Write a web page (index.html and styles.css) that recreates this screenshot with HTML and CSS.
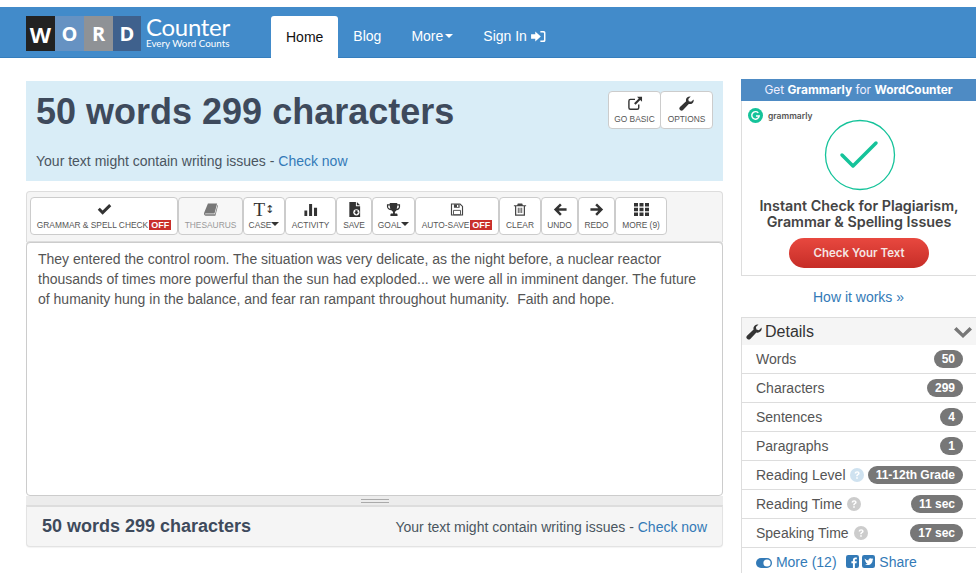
FILE: index.html
```html
<!DOCTYPE html>
<html lang="en">
<head>
<meta charset="utf-8">
<title>WordCounter</title>
<link rel="stylesheet" href="styles.css">
</head>
<body>
<svg class="defs" width="0" height="0">
  <defs>
    <symbol id="i-wrench" viewBox="0 0 16 16"><path d="M15.6 3.6c.3 1.6-.1 3-1.3 4-1.1 1-2.5 1.300-3.900.8L4.300 15c-.8.800-2.100.800-2.900.1l-.5-.5c-.8-.8-.7-2.100.1-2.900l6.600-6.100C7.200 4.200 7.500 2.800 8.600 1.700 9.700.6 11.100.2 12.500.5L9.900 3.100l.5 2.500 2.500.6z"/></symbol>
    <symbol id="i-check" viewBox="0 0 16 16"><path d="M6 13.500 0.800 8.300 3 6.100l3 3L13 2.200l2.200 2.200z"/></symbol>
    <symbol id="i-q" viewBox="0 0 14 14"><circle cx="7" cy="7" r="7"/><path d="M4.600 5.400C4.800 4 5.800 3.200 7.200 3.200c1.400 0 2.400.9 2.400 2 0 1-.6 1.500-1.200 1.900-.5.3-.7.5-.7 1.100H6.200c0-1 .3-1.500 1-2 .5-.3.800-.5.800-1 0-.4-.3-.7-.8-.7-.6 0-.9.300-1 .900zM6.200 9.200h1.600v1.600H6.200z" fill="#fff"/></symbol>
  </defs>
</svg>
<header class="navbar">
  <a class="logo" href="#">
    <span class="tile tile-w">W</span><span class="tile tile-o">O</span><span class="tile tile-r">R</span><span class="tile tile-d">D</span>
    <span class="logo-text"><span class="logo-main">Counter</span><span class="logo-sub">Every Word Counts</span></span>
  </a>
  <nav class="nav">
    <a class="nav-item active" href="#">Home</a>
    <a class="nav-item" href="#">Blog</a>
    <a class="nav-item" href="#">More<span class="caret caret-white"></span></a>
    <a class="nav-item" href="#">Sign In
      <svg class="signin" viewBox="0 0 16 14" width="15" height="13"><path d="M0 4.500h4.500V1.500L10.500 7l-6 5.500v-3H0z" fill="#fff"/><path d="M10 1h3.500C15 1 15.500 2 15.500 3v8c0 1-.5 2-2 2H10v-1.600h3c.6 0 .9-.4.900-.9V3.500c0-.5-.3-.9-.9-.9h-3z" fill="#fff"/></svg>
    </a>
  </nav>
</header>

<div class="page">
  <main class="main">
    <section class="hero">
      <h1 class="hero-title">50 words 299 characters</h1>
      <p class="hero-note">Your text might contain writing issues - <a href="#">Check now</a></p>
      <div class="hero-btns">
        <a class="tool hero-tool t-basic" href="#">
          <svg class="ic" viewBox="0 0 16 16" width="16" height="16"><path d="M12 9v3.500c0 1-.7 1.600-1.600 1.600H3.100C2.200 14.100 1.500 13.500 1.500 12.500V5.200c0-1 .7-1.600 1.600-1.600H8" fill="none" stroke="#333" stroke-width="1.500"/><path d="M10.200 0.800H15.500V6L13.600 4.200 8.600 9.300 7 7.700l5-5z" fill="#333"/></svg>
          <span>GO BASIC</span>
        </a>
        <a class="tool hero-tool t-options" href="#">
          <svg class="ic" width="15" height="15"><use href="#i-wrench"/></svg>
          <span>OPTIONS</span>
        </a>
      </div>
    </section>

    <div class="toolbar">
      <a class="tool t-grammar" href="#"><svg class="ic" width="15" height="15"><use href="#i-check"/></svg><span>GRAMMAR &amp; SPELL CHECK<b class="off">OFF</b></span></a>
      <a class="tool tool-dim t-thes" href="#"><svg class="ic" viewBox="0 0 16 16" width="14" height="14"><path d="M4.500 1H15l-3 11.500H1.800C1 12.500.8 13.500 1.800 13.500H12.500l3-11 .5.800-3 11.700H2C.3 15-.4 13.500.3 11.500z" fill="#777"/></svg><span>THESAURUS</span></a>
      <a class="tool t-case" href="#"><span class="ic tt">T<span class="tt-arrow">↕</span></span><span>CASE<i class="caret"></i></span></a>
      <a class="tool t-activity" href="#"><svg class="ic" viewBox="0 0 16 16" width="15" height="15"><path d="M1.500 9h3v6h-3zM6.500 2h3.200v13H6.500zM11.700 6H15v9h-3.300z" fill="#333"/></svg><span>ACTIVITY</span></a>
      <a class="tool t-save" href="#"><svg class="ic" viewBox="0 0 16 16" width="15" height="15"><path d="M2.500 0H9.500v4.500H14V16H2.500z" fill="#333"/><path d="M10.500 0 14 3.500H10.500z" fill="#333"/><circle cx="10" cy="11" r="3.300" fill="#fff"/><path d="M8.800 8.800h2.400v2h1.200L10 13.300 7.600 10.800h1.200z" fill="#333"/></svg><span>SAVE</span></a>
      <a class="tool t-goal" href="#"><svg class="ic" viewBox="0 0 16 16" width="15" height="15"><path d="M4 1h8v1.500h3V5c0 2-1.500 3.500-3.800 3.800-.5.800-1.200 1.300-1.700 1.500v2h1.500c.8 0 1.300.5 1.300 1.200V15H4.700v-1.500c0-.7.500-1.200 1.300-1.200h1.500v-2C7 10.100 6.300 9.600 5.800 8.800 3.500 8.500 1 7 1 5V2.500h3zM2.300 3.800V5c0 1 .9 1.800 2.300 2.300C4.300 6.300 4.100 5.100 4 3.800zM13.700 3.800H12c-.1 1.300-.3 2.500-.6 3.500 1.400-.5 2.300-1.300 2.300-2.300z" fill="#333" fill-rule="evenodd"/></svg><span>GOAL<i class="caret"></i></span></a>
      <a class="tool t-auto" href="#"><svg class="ic" viewBox="0 0 16 16" width="14" height="14"><path d="M1.700 1.700h9.800l2.800 2.800v9.800H1.700z" fill="none" stroke="#444" stroke-width="1.300"/><path d="M4.500 2v4h6.500V2zM8 2.800h1.500v2.400H8z" fill="#444" fill-rule="evenodd"/><path d="M4 9h8v5H4z" fill="none" stroke="#444"/></svg><span>AUTO-SAVE<b class="off">OFF</b></span></a>
      <a class="tool t-clear" href="#"><svg class="ic" viewBox="0 0 16 16" width="14" height="14"><path d="M5.500 1h5l.8 2H15v1.300h-1.300V15H2.300V4.300H1V3h3.700zM3.700 4.300v9.400h8.600V4.300zM5.500 6h1v6h-1zM7.500 6h1v6h-1zM9.500 6h1v6h-1z" fill="#444" fill-rule="evenodd"/></svg><span>CLEAR</span></a>
      <a class="tool t-undo" href="#"><svg class="ic" viewBox="0 0 16 16" width="14" height="14"><path d="M8 1 10 3 6.500 6.500H15.500v3H6.500L10 13l-2 2L1 8z" fill="#333"/></svg><span>UNDO</span></a>
      <a class="tool t-undo" href="#"><svg class="ic" viewBox="0 0 16 16" width="14" height="14"><path d="M8 1 6 3l3.500 3.500H.5v3h9L6 13l2 2 7-7z" fill="#333"/></svg><span>REDO</span></a>
      <a class="tool t-more" href="#"><svg class="ic" viewBox="0 0 15 13" width="15" height="13"><path d="M0 0h4v3.500H0zM5.500 0h4v3.500h-4zM11 0h4v3.500h-4zM0 4.750h4v3.500H0zM5.500 4.750h4v3.500h-4zM11 4.750h4v3.500h-4zM0 9.500h4V13H0zM5.500 9.500h4V13h-4zM11 9.500h4V13h-4z" fill="#333"/></svg><span>MORE (9)</span></a>
    </div>

    <div class="editor">They entered the control room. The situation was very delicate, as the night before, a nuclear reactor thousands of times more powerful than the sun had exploded... we were all in imminent danger. The future of humanity hung in the balance, and fear ran rampant throughout humanity.&nbsp; Faith and hope.</div>
    <div class="grip"><span class="grip-lines"></span></div>
    <footer class="summary">
      <strong>50 words 299 characters</strong>
      <span>Your text might contain writing issues - <a href="#">Check now</a></span>
    </footer>
  </main>

  <aside class="side">
    <div class="ad">
      <div class="ad-head">Get <b>Grammarly</b> for <b>WordCounter</b></div>
      <div class="ad-brand">
        <svg viewBox="0 0 16 16" width="15" height="15"><circle cx="8" cy="8" r="8" fill="#15c39a"/><path d="M11 5.200A4 4 0 1 0 12 8.500H8.500" fill="none" stroke="#fff" stroke-width="1.500"/></svg>
        <span>grammarly</span>
      </div>
      <svg class="ad-check" viewBox="0 0 72 72" width="72" height="72"><circle cx="36" cy="36" r="34.500" fill="none" stroke="#15c39a" stroke-width="1.300"/><path d="M18 36l11 11 23-23" fill="none" stroke="#15c39a" stroke-width="3.500" stroke-linecap="round" stroke-linejoin="round"/></svg>
      <div class="ad-text">Instant Check for Plagiarism,<br>Grammar &amp; Spelling Issues</div>
      <a class="ad-btn" href="#">Check Your Text</a>
    </div>
    <a class="how" href="#">How it works »</a>

    <section class="details">
      <h2 class="details-head">
        <svg width="16" height="16"><use href="#i-wrench"/></svg>
        <span>Details</span>
        <svg class="chev" viewBox="0 0 18 12" width="18" height="12"><path d="M2.500 1 9 7.500 15.500 1 18 3.500 9 12 0 3.500z" fill="#777"/></svg>
      </h2>
      <ul class="stats">
        <li><span>Words</span><b class="badge">50</b></li>
        <li><span>Characters</span><b class="badge">299</b></li>
        <li><span>Sentences</span><b class="badge">4</b></li>
        <li><span>Paragraphs</span><b class="badge">1</b></li>
        <li><span>Reading Level <svg class="q q-blue" width="14" height="14"><use href="#i-q"/></svg></span><b class="badge">11-12th Grade</b></li>
        <li><span>Reading Time <svg class="q" width="14" height="14"><use href="#i-q"/></svg></span><b class="badge">11 sec</b></li>
        <li><span>Speaking Time <svg class="q" width="14" height="14"><use href="#i-q"/></svg></span><b class="badge">17 sec</b></li>
        <li class="stats-more">
          <a href="#"><svg viewBox="0 0 16 10" width="16" height="10"><rect width="16" height="10" rx="5" fill="#337ab7"/><circle cx="11" cy="5" r="3.600" fill="#fff"/></svg> More (12)</a>
          <a class="share" href="#"><svg viewBox="0 0 12 12" width="13" height="13"><rect width="12" height="12" rx="2" fill="#337ab7"/><path d="M8.200 12V7.500h1.500l.2-1.800H8.200V4.700c0-.5.200-.8.800-.8h1V2.300H8.700C7.200 2.300 6.400 3.200 6.400 4.500v1.200H5v1.800h1.400V12z" fill="#fff"/></svg> <svg viewBox="0 0 12 12" width="13" height="13"><rect width="12" height="12" rx="2" fill="#337ab7"/><path d="M2.500 3.200c1 1.200 2.200 1.800 3.500 1.900C5.800 3.800 7 3 8 3c.5 0 .9.200 1.200.5l1-.4-.5.900.8-.2-.7.8c0 2.500-1.800 4.700-4.500 4.700-1 0-1.800-.3-2.500-.7 1 .1 1.700-.2 2.300-.7-.8 0-1.300-.5-1.500-1.100h.7c-.8-.3-1.300-.9-1.300-1.800l.7.200C3 5.100 2.200 4.200 2.500 3.200z" fill="#fff"/></svg> Share</a>
        </li>
      </ul>
    </section>
  </aside>
</div>
</body>
</html>
```

FILE: styles.css
```css
* { box-sizing: border-box; }
html, body { margin: 0; padding: 0; height: 573px; overflow: hidden; }
body { background: #fff; color: #555; font-family: "Liberation Sans", Arial, sans-serif; font-size: 14px; padding-top: 7px; }
a { color: #337ab7; text-decoration: none; }
.defs { position: absolute; }

.navbar { height: 51px; background: #428bca; border-bottom: 1px solid #357ebd; display: flex; padding-left: 26px; }
.logo { display: flex; width: 245px; height: 35px; margin-top: 9px; color: #fff; }
.tile { width: 29px; height: 35px; display: flex; align-items: center; justify-content: center; font-family: "Open Sans", sans-serif; font-weight: 700; font-size: 20px; color: #fff; }
.tile-w { background: #222; font-size: 22px; }
.tile-o { background: #6692c2; }
.tile-r { background: #8f9296; }
.tile-d { background: #3f618d; width: 28px; }
.logo-text { display: flex; flex-direction: column; margin-left: 5px; font-family: Lato, sans-serif; }
.logo-main { font-size: 24px; line-height: 22px; letter-spacing: -.3px; }
.logo-sub { font-size: 9.800px; line-height: 10px; }
.nav { display: flex; align-items: flex-end; }
.nav-item { height: 41px; padding: 0 15px; display: flex; align-items: center; gap: 4px; color: #fff; font-size: 14px; padding-bottom: 1px; }
.nav-item.active { background: #fff; color: #111; border-radius: 3px 3px 0 0; height: 42px; margin-bottom: -1px; }
.caret { display: inline-block; width: 0; height: 0; border: 4px solid transparent; border-top-color: #333; border-bottom: 0; vertical-align: 2px; }
.caret-white { border-top-color: #fff; margin-left: -2px; }

.page { display: flex; align-items: flex-start; gap: 18px; padding: 23px 0 0 26px; }
.main { width: 697px; flex: none; }

.hero { position: relative; height: 100px; background: #d9edf7; padding: 11px 10px 0; }
.hero-title { margin: 0; font-size: 36px; line-height: 40px; font-weight: 700; color: #3e4a5c; }
.hero-note { margin: 19px 0 0; font-size: 14px; line-height: 20px; color: #4a5560; }
.hero-btns { position: absolute; top: 10px; right: 10px; display: flex; }

.tool { display: flex; flex-direction: column; align-items: center; height: 38px; padding-top: 4px; background: #fff; border: 1px solid #ccc; border-radius: 4px; color: #555; font-size: 8.400px; line-height: 10px; white-space: nowrap; flex: none; }
.tool .ic { height: 15px; margin-bottom: 3px; fill: #333; display: block; }
.tool-dim { background: #f7f7f7; color: #999; }
.t-basic { width: 53px; }
.t-options { width: 53px; margin-left: -1px; }
.t-grammar { width: 148px; }
.t-thes { width: 65px; }
.t-case { width: 42px; }
.t-activity { width: 51px; }
.t-save { width: 36px; }
.t-goal { width: 43px; }
.t-auto { width: 84px; }
.t-clear { width: 42px; }
.t-undo { width: 37px; }
.t-more { width: 52px; }
.tt { font-family: "Liberation Serif", serif; font-size: 19px; line-height: 15px; color: #333; display: flex !important; }
.tt-arrow { font-size: 11px; font-family: "DejaVu Sans", sans-serif; }
.off { background: #c9302c; color: #fff; font-weight: 700; font-size: 9px; padding: 0 2px; margin-left: 1px; display: inline-block; line-height: 10px; }

.toolbar { display: flex; height: 51px; margin-top: 10px; padding: 5px 3px 0; background: #f5f5f5; border: 1px solid #ddd; border-bottom: 0; border-radius: 4px 4px 0 0; }

.editor { height: 254px; padding: 6px 11px; background: #fff; border: 1px solid #ccc; border-radius: 4px; font-size: 14px; line-height: 20px; color: #555; box-shadow: 0 -1px 0 #ddd; }
.grip { height: 10px; background: #ececec; border-bottom: 1px solid #ddd; display: flex; align-items: center; justify-content: center; }
.grip-lines { width: 28px; height: 4px; border-top: 1px solid #aaa; border-bottom: 1px solid #aaa; }
.summary { height: 41px; display: flex; align-items: center; justify-content: space-between; padding: 0 15px; background: #f5f5f5; border: 1px solid #e3e3e3; border-top: 1px solid #ddd; border-radius: 0 0 4px 4px; box-shadow: 0 1px 1px rgba(0,0,0,.05); color: #4a5560; }
.summary strong { font-size: 18px; color: #3e4a5c; }

.side { width: 235px; flex: none; margin-top: -2px; }
.ad { height: 197px; border: 1px solid #ddd; border-top: 0; border-right: 0; text-align: center; position: relative; }
.ad-head { height: 22px; margin-left: -1px; background: #4e8bc4; color: #eef; font-family: Inter, sans-serif; font-size: 11.900px; line-height: 22px; }
.ad-head b { color: #fff; }
.ad-brand { position: absolute; left: 6px; top: 29px; display: flex; align-items: center; gap: 5px; font-family: Inter, sans-serif; font-size: 8.500px; font-weight: 600; color: #555; }
.ad-check { display: block; margin: 18px 0 0 82px; }
.ad-text { margin-top: 7px; font-family: Inter, sans-serif; font-weight: 600; font-size: 14.300px; line-height: 16px; color: #444; }
.ad-btn { display: block; width: 140px; height: 30px; margin: 8px 0 0 47px; border-radius: 15px; background: linear-gradient(#e8483f, #c62d27); color: #f5e6e4; font-family: Inter, sans-serif; font-weight: 600; font-size: 11.500px; line-height: 30px; }
.how { display: block; text-align: center; margin-top: 11px; line-height: 20px; font-size: 14px; }

.details { margin-top: 10px; border-top: 1px solid #ddd; border-left: 1px solid #ddd; }
.details-head { margin: 0; height: 27px; display: flex; align-items: center; gap: 3px; padding: 0 4px; background: #f5f5f5; font-size: 16px; font-weight: 400; color: #333; }
.details-head svg { fill: #333; }
.chev { margin-left: auto; }
.stats { list-style: none; margin: 0; padding: 0; }
.stats li { height: 29px; display: flex; align-items: center; justify-content: space-between; padding: 0 13px 0 14px; border-bottom: 1px solid #ddd; font-size: 14px; color: #555; }
.stats li.stats-more { border-bottom: 0; height: 27px; justify-content: flex-start; gap: 9px; padding-left: 14px; }
.stats-more svg { vertical-align: -1px; }
.badge { background: #777; color: #fff; font-size: 12px; line-height: 18px; border-radius: 9px; padding: 0 8px; }
.q { fill: #ccc; vertical-align: -2px; margin-left: 1px; }
.q-blue { fill: #cfe2f0; }
```
